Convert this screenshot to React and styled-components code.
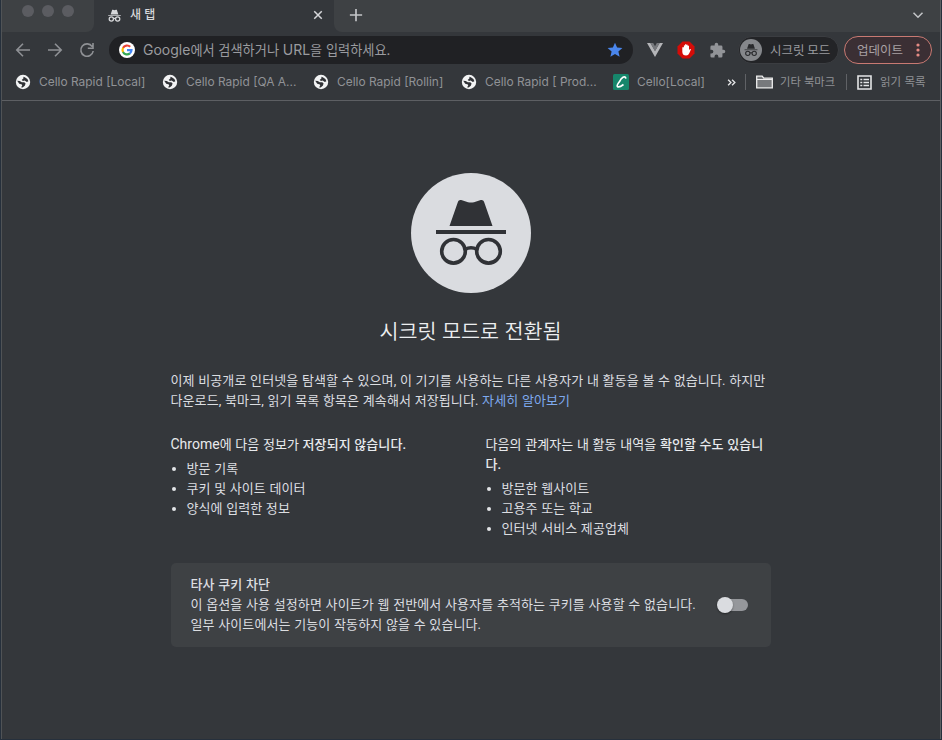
import React from "react";
import styled, { createGlobalStyle } from "styled-components";

const Global = createGlobalStyle`
  * { box-sizing: border-box; }
  html, body { margin: 0; background: #34373b; }
  body { font-family: Roboto, "Noto Sans CJK KR", sans-serif; overflow: hidden; }
  ul, h1, p { margin: 0; padding: 0; }
  svg { display: block; flex: none; }
`;

const Desktop = styled.div`
  width: 942px; height: 740px; padding: 0 1px 1px; background: #26303c;
`;
const Window = styled.div`
  width: 940px; height: 739px; background: #34373b; overflow: hidden;
  display: flex; flex-direction: column;
  border-left: 1px solid #505356; border-right: 1px solid #5c5f62;
`;
const TabStrip = styled.header`
  height: 32px; flex: none; display: flex; background: #34373b;
`;
const Lights = styled.div`
  width: 92px; padding: 5px 0 0 20px; display: flex; gap: 8px;
  background: #3e4144; border-bottom-right-radius: 8px;
`;
const Light = styled.i`
  width: 12px; height: 12px; border-radius: 50%; background: #5b5c61;
`;
const Tab = styled.div`
  width: 240px; display: flex; align-items: center; padding: 0 10px 2px 14px; gap: 9px;
  color: #d6d7da;
`;
const TabTitle = styled.span`
  font: 500 12px/20px Inter, "Noto Sans CJK KR", sans-serif; flex: 1;
`;
const StripRest = styled.div`
  flex: 1; display: flex; justify-content: space-between; align-items: center;
  padding: 0 16px 2px 15px; background: #3e4144; border-bottom-left-radius: 8px; color: #c3c5c8;
`;
const Toolbar = styled.div`
  height: 36px; flex: none; display: flex; align-items: center; padding-left: 13px; color: #8f9195;
`;
const NavIcons = styled.div`display: flex; gap: 16px; width: 94px;`;
const Omnibox = styled.div`
  width: 524px; height: 28px; border-radius: 14px; background: #202124; display: flex; align-items: center;
  padding: 0 10px 0 10px; gap: 8px;
`;
const Placeholder = styled.span`
  flex: 1; font: 400 13.2px/24px Inter, "Noto Sans CJK KR", sans-serif; color: #9a9b9f;
  white-space: nowrap;
`;
const Extensions = styled.div`display: flex; align-items: center; gap: 14px; padding-left: 14px;`;
const Profile = styled.div`
  width: 101px; height: 28px; flex: none; margin-left: 12px; border-radius: 14px; background: #232427; border: 1px solid #3b3d41;
  display: flex; align-items: center; gap: 8px; padding-left: 1px; color: #9a9b9f;
`;
const Update = styled.div`
  width: 88px; height: 28px; flex: none; margin-left: 5px; border-radius: 14px;
  border: 1.5px solid #c87972; background: #3b2f34; color: #a9a1a4;
  display: flex; align-items: center; justify-content: space-between; padding: 0 11px 0 12px;
`;
const ChipText = styled.span`
  font: 400 12.5px/20px "Noto Sans CJK KR", sans-serif; white-space: nowrap;
`;
const Bookmarks = styled.nav`
  height: 33px; flex: none; display: flex; align-items: center; padding: 0 0 4px 13px;
  border-bottom: 1px solid #5d5f63; color: #909296;
`;
const Bookmark = styled.div`
  width: ${(p) => p.$w}px; flex: none; display: flex; align-items: center; gap: ${(p) => p.$gap || 8}px; white-space: nowrap;
  font: 400 ${(p) => p.$size || 11.95}px/20px Inter, "Noto Sans CJK KR", sans-serif;
`;
const More = styled.span`width: 18px; display: flex; color: #e4e5e7;`;
const Divider = styled.i`width: 1px; height: 16px; background: #606266; margin-right: 10px;`;
const Page = styled.main`
  width: 600px; margin-left: 169px; padding-top: 72px; display: flex; flex-direction: column;
  font-size: 13px; line-height: 20px; color: #dcdee1; word-spacing: .3px; letter-spacing: .1px; white-space: nowrap;
`;
const Hero = styled.div`display: flex; justify-content: center; height: 120px;`;
const Title = styled.h1`
  margin: 23px 0 0 -1px; height: 31px; font-size: 20.7px; line-height: 32px; font-weight: 350; text-align: center; color: #eceef0;
  letter-spacing: 0;
`;
const Intro = styled.p`margin: 24px 0 0 -.5px; height: 40px;`;
const Link = styled.a`color: #7ea9ee;`;
const Columns = styled.div`
  display: grid; grid-template-columns: 315px 285px; margin: 24px 0 0 -.5px; height: 128px; letter-spacing: .07px;
`;
const Lead = styled.p`color: #e8eaed; margin-bottom: 4px;`;
const Latin = styled.span`font-size: 14px; line-height: 1; letter-spacing: 0;`;
const Strong = styled.span`font-weight: 500;`;
const List = styled.ul`list-style: none;`;
const Item = styled.li`
  display: flex; align-items: center; gap: 11px; padding-left: 1px;
  &::before { content: ""; width: 4px; height: 4px; border-radius: 50%; background: #e2e4e7; }
`;
const Card = styled.section`
  height: 84px; border-radius: 5px; background: #3e4144; padding: 0 23px 0 19.5px;
  display: flex; align-items: center; justify-content: space-between;
`;
const Track = styled.div`
  width: 27px; height: 12px; border-radius: 6px; background: #95979b; display: flex; align-items: center;
`;
const Knob = styled.i`
  width: 16px; height: 16px; margin-left: -4px; flex: none; border-radius: 50%; background: #dadce0; box-shadow: 0 1px 2px #0006;
`;

const Hat = () => (
  <>
    <path d="M38.5 53 46.8 29.2C47.4 27.2 49 26.6 51 27.3L57 29.2Q60 30 63 29.2L69 27.3C71 26.6 72.6 27.2 73.2 29.2L81.5 53Z" />
    <path d="M25 57h70v4H25z" />
  </>
);
const Specs = ({ w = 3.6 }) => (
  <g fill="none" stroke="currentColor" strokeWidth={w}>
    <circle cx="42.5" cy="78.3" r="11.8" />
    <circle cx="77.5" cy="78.3" r="11.8" />
    <path d="M54 76.5q6-3.4 12 0" />
  </g>
);
const Spy = ({ size, w }) => (
  <svg width={size} height={size} viewBox="24 24 72 70" fill="currentColor"><Hat /><Specs w={w} /></svg>
);
const Stroke = ({ size = 16, d, w = 1.6 }) => (
  <svg width={size} height={size} viewBox="0 0 16 16" fill="none" stroke="currentColor" strokeWidth={w}><path d={d} /></svg>
);
const Globe = () => (
  <svg width="16" height="16" viewBox="0 0 16 16">
    <circle cx="8" cy="8" r="7.2" fill="#f2f3f4" />
    <path d="M2.200 6.800 4.800 7 6.800 8.200 9.300 8.300 10.600 9.600 9.800 11.800 7.600 13.400 6 13.300 7.200 11.800 6.900 10.600 4.200 9.800ZM8.300 2.800 9.800 3.200 12.400 5 13.400 7.300 11.800 7.900 9.600 6.600 8 6.900 6.700 5.900 8.500 4.300Z" fill="#303236" />
  </svg>
);
const Google = () => (
  <svg width="16" height="16" viewBox="0 0 16 16">
    <circle cx="8" cy="8" r="8" fill="#fff" />
    <g fill="none" strokeWidth="2.2">
      <path d="M11.2 4.8A4.5 4.5 0 0 0 4 6" stroke="#ea4335" />
      <path d="M4.1 5.8A4.5 4.5 0 0 0 4.1 10.2" stroke="#fbbc05" />
      <path d="M4 10A4.5 4.5 0 0 0 10.9 11.4" stroke="#34a853" />
      <path d="M10.9 11.4A4.4 4.4 0 0 0 12.5 8.1H8" stroke="#4285f4" />
    </g>
  </svg>
);

const marks = [
  ["Cello Rapid [Local]", 147],
  ["Cello Rapid [QA A...", 151],
  ["Cello Rapid [Rollin]", 148],
  ["Cello Rapid [ Prod...", 152],
];

export default function App() {
  return (
    <Desktop>
      <Global />
      <Window>
        <TabStrip>
          <Lights><Light /><Light /><Light /></Lights>
          <Tab>
            <Spy size={13} w={7} />
            <TabTitle>새 탭</TabTitle>
            <Stroke size={12} d="M3 3l10 10M13 3 3 13" w={2} />
          </Tab>
          <StripRest>
            <Stroke size={14} d="M8 1v14M1 8h14" w={1.9} />
            <Stroke size={12} d="M2 5l6 6 6-6" w={2} />
          </StripRest>
        </TabStrip>
        <Toolbar>
          <NavIcons>
            <Stroke d="M15 8H2M8 1.8 1.8 8 8 14.2" />
            <Stroke d="M1 8h13M8 1.8 14.2 8 8 14.2" />
            <Stroke d="M13.2 4.6A6.2 6.2 0 1 0 14.2 9M14 1v5.3H8.8" />
          </NavIcons>
          <Omnibox>
            <Google />
            <Placeholder><Latin>Google</Latin>에서 검색하거나 <Latin>URL</Latin>을 입력하세요.</Placeholder>
            <svg width="16" height="16" viewBox="0 0 16 16"><path fill="#4a86ec" d="m8 .8 2.1 4.8 5.3.5-4 3.5 1.2 5.2L8 12.1l-4.600 2.700 1.200-5.200-4-3.500 5.300-.5z" /></svg>
          </Omnibox>
          <Extensions>
            <svg width="16" height="16" viewBox="0 0 16 16"><path fill="#b4b5b8" d="M0 1h3.500L8 9l4.500-8H16L8 15z" /><path fill="#77797d" d="M3.300 1H6.200L8 4.200 9.800 1h2.900L8 9.300z" /></svg>
            <svg width="18" height="18" viewBox="0 0 18 18">
              <path fill="#d50c08" d="M5.500.5h7l5 5v7l-5 5h-7l-5-5v-7z" />
              <path fill="#fff" d="M6.900 10.500V4.600q.6-.8 1.200 0V3.500q.7-.8 1.300 0V3.900q.7-.8 1.300 0V5q.7-.8 1.300 0V9l1-.9q1-.3.900.5L12.400 12q-1 2.500-3.300 2.500Q5.500 14.500 5.300 11V6.500q.8-1 1.600 0z" />
            </svg>
            <svg width="17" height="17" viewBox="0 0 24 24"><path fill="#929498" d="M20.500 11H19V7a2 2 0 0 0-2-2h-4V3.500a2.500 2.500 0 0 0-5 0V5H4a2 2 0 0 0-2 2v3.800h1.500a2.700 2.700 0 0 1 0 5.400H2V20a2 2 0 0 0 2 2h3.800v-1.500a2.700 2.700 0 0 1 5.400 0V22H17a2 2 0 0 0 2-2v-4h1.500a2.500 2.500 0 0 0 0-5z" /></svg>
          </Extensions>
          <Profile>
            <svg width="22" height="22" viewBox="0 0 120 120" color="#292a2d" fill="currentColor"><circle cx="60" cy="60" r="60" fill="#85878b" /><Hat /><Specs w={6} /></svg>
            <ChipText>시크릿 모드</ChipText>
          </Profile>
          <Update>
            <ChipText>업데이트</ChipText>
            <svg width="4" height="14" viewBox="0 0 4 14" fill="#e58b84"><circle cx="2" cy="2" r="1.600" /><circle cx="2" cy="7" r="1.600" /><circle cx="2" cy="12" r="1.600" /></svg>
          </Update>
        </Toolbar>
        <Bookmarks>
          {marks.map(([t, w]) => <Bookmark key={t} $w={w}><Globe />{t}</Bookmark>)}
          <Bookmark $w={114}>
            <svg width="16" height="16" viewBox="0 0 16 16"><rect width="16" height="16" rx="1.500" fill="#16866b" /><path d="M12.800 4.600Q12.500 2.300 10 3.200Q7.800 4.500 6.600 7.500Q3.300 11.500 4.500 12.700Q6.500 13.500 10.500 10.500" fill="none" stroke="#fff" strokeWidth="1.700" /></svg>
            Cello[Local]
          </Bookmark>
          <More><Stroke size={9} w={2.4} d="M2 3l5 5-5 5M9 3l5 5-5 5" /></More>
          <Divider />
          <Bookmark $w={90} $size={11.3} $gap={7}>
            <svg width="17" height="14" viewBox="0 0 17 14"><path d="M.7 12.800V1.200h5.500l1.500 2h8.600v9.600z" fill="#77797c" stroke="#eee" strokeWidth="1.300" /><path d="M1 4.500h15" stroke="#eee" /></svg>
            기타 북마크
          </Bookmark>
          <Divider />
          <Bookmark $w={80} $size={11.5}>
            <svg width="15" height="15" viewBox="0 0 15 15" fill="none" stroke="#e4e5e7" strokeWidth="1.600"><path d="M1 1h13v13H1zM3.300 4.500h2M6.500 4.500h5.500M3.300 7.500h2M6.500 7.500h5.500M3.300 10.500h2M6.500 10.500h5.500" /></svg>
            읽기 목록
          </Bookmark>
        </Bookmarks>
        <Page>
          <Hero>
            <svg width="120" height="120" viewBox="0 0 120 120" color="#303236" fill="currentColor"><circle cx="60" cy="60" r="60" fill="#dadce0" /><Hat /><Specs /></svg>
          </Hero>
          <Title>시크릿 모드로 전환됨</Title>
          <Intro>
            이제 비공개로 인터넷을 탐색할 수 있으며, 이 기기를 사용하는 다른 사용자가 내 활동을 볼 수 없습니다. 하지만<br />
            다운로드, 북마크, 읽기 목록 항목은 계속해서 저장됩니다. <Link>자세히 알아보기</Link>
          </Intro>
          <Columns>
            <div>
              <Lead><Latin>Chrome</Latin>에 다음 정보가 <Strong>저장되지 않습니다.</Strong></Lead>
              <List><Item>방문 기록</Item><Item>쿠키 및 사이트 데이터</Item><Item>양식에 입력한 정보</Item></List>
            </div>
            <div>
              <Lead>다음의 관계자는 내 활동 내역을 <Strong>확인할 수도 있습니<br />다.</Strong></Lead>
              <List><Item>방문한 웹사이트</Item><Item>고용주 또는 학교</Item><Item>인터넷 서비스 제공업체</Item></List>
            </div>
          </Columns>
          <Card>
            <div>
              <Strong>타사 쿠키 차단</Strong><br />
              이 옵션을 사용 설정하면 사이트가 웹 전반에서 사용자를 추적하는 쿠키를 사용할 수 없습니다.<br />
              일부 사이트에서는 기능이 작동하지 않을 수 있습니다.
            </div>
            <Track><Knob /></Track>
          </Card>
        </Page>
      </Window>
    </Desktop>
  );
}
